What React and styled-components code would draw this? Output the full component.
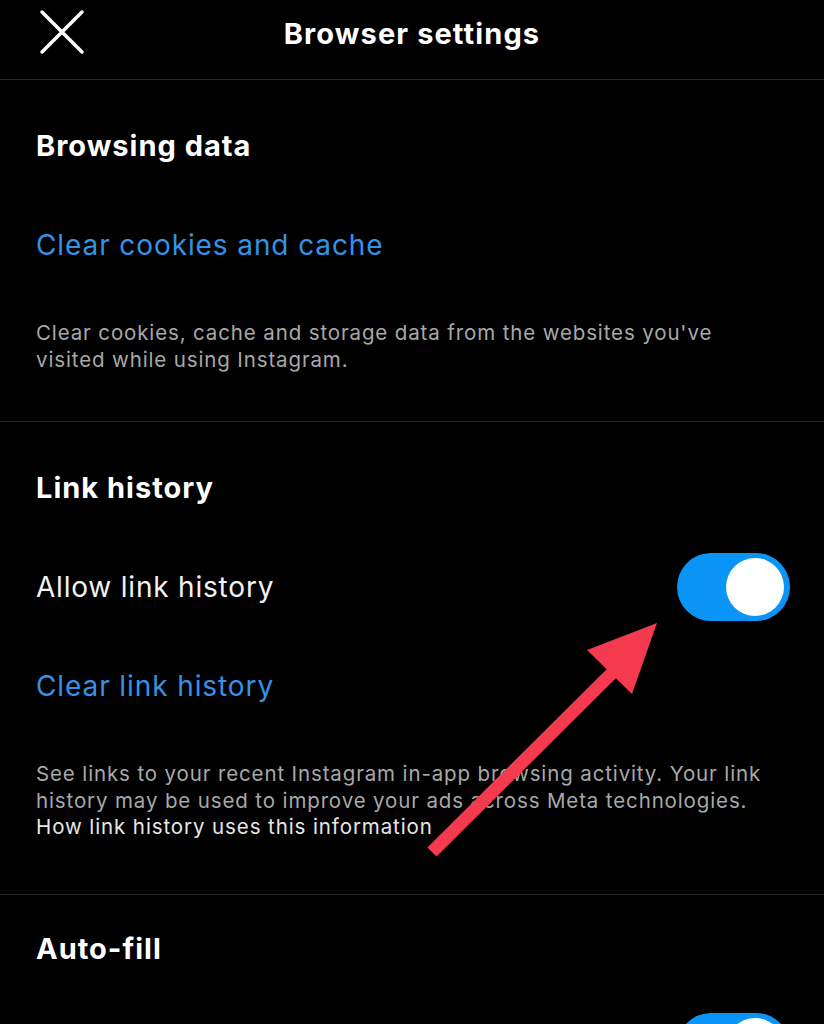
import React from 'react';
import styled, { createGlobalStyle } from 'styled-components';

const GlobalStyle = createGlobalStyle`
  html, body {
    margin: 0;
    padding: 0;
    background: #000;
  }
  body {
    font-family: Inter, Roboto, "Liberation Sans", sans-serif;
    -webkit-font-smoothing: antialiased;
  }
`;

const blue = '#3592e6';
const toggleBlue = '#0a95f6';
const grey = '#a8a8a8';
const divider = '#262626';

const Screen = styled.div`
  position: relative;
  width: 824px;
  height: 1024px;
  overflow: hidden;
  background: #000;
  color: #f5f5f5;
`;

const Header = styled.div`
  height: 79px;
  display: flex;
  align-items: center;
  justify-content: center;
  position: relative;
  border-bottom: 1px solid ${divider};
`;

const CloseButton = styled.button`
  position: absolute;
  left: 38px;
  top: 8px;
  width: 48px;
  height: 48px;
  padding: 0;
  border: none;
  background: none;
  display: flex;
  align-items: center;
  justify-content: center;
`;

const HeaderTitle = styled.h1`
  margin: 0 0 12px;
  font-size: 29px;
  font-weight: 700;
  letter-spacing: 1.1px;
  color: #fff;
`;

const Section = styled.section`
  padding: ${({ $top }) => $top}px 36px ${({ $bottom }) => $bottom}px;
  border-bottom: ${({ $last }) => ($last ? 'none' : `1px solid ${divider}`)};
  display: flex;
  flex-direction: column;
`;

const SectionTitle = styled.h2`
  margin: 0;
  font-size: 29px;
  line-height: 36px;
  font-weight: 700;
  letter-spacing: 1px;
  color: #fff;
`;

const LinkAction = styled.a`
  display: block;
  margin-top: ${({ $gap }) => $gap}px;
  font-size: 28px;
  line-height: 36px;
  color: ${blue};
  text-decoration: none;
  letter-spacing: 0.9px;
`;

const Description = styled.p`
  margin: ${({ $gap }) => $gap}px 0 0;
  font-size: 20.5px;
  line-height: 26.5px;
  color: ${grey};
  letter-spacing: 0.87px;
  white-space: nowrap;
`;

const InfoLink = styled.span`
  color: #e6e6e6;
  letter-spacing: 0.9px;
`;

const ToggleRow = styled.div`
  margin-top: ${({ $gap }) => $gap}px;
  height: 68px;
  display: flex;
  align-items: center;
  justify-content: space-between;
`;

const RowLabel = styled.span`
  font-size: 28px;
  color: #f2f2f2;
  letter-spacing: 0.8px;
`;

const Track = styled.div`
  width: 113px;
  height: 68px;
  margin-right: -2px;
  border-radius: 34px;
  background: ${toggleBlue};
  display: flex;
  align-items: center;
  justify-content: flex-end;
  padding: 0 6px;
  box-sizing: border-box;
  flex-shrink: 0;
`;

const Knob = styled.div`
  width: 58px;
  height: 58px;
  border-radius: 50%;
  background: #fff;
`;

const ArrowOverlay = styled.svg`
  position: absolute;
  left: 0;
  top: 0;
  pointer-events: none;
`;

function Toggle() {
  return (
    <Track>
      <Knob />
    </Track>
  );
}

export default function App() {
  return (
    <>
      <GlobalStyle />
      <Screen>
        <Header>
          <CloseButton aria-label="Close">
            <svg width="46" height="46" viewBox="0 0 46 46">
              <path d="M3 3 L43 43 M43 3 L3 43" stroke="#fff" strokeWidth="3.5" strokeLinecap="round" />
            </svg>
          </CloseButton>
          <HeaderTitle>Browser settings</HeaderTitle>
        </Header>

        <Section $top={48} $bottom={48}>
          <SectionTitle>Browsing data</SectionTitle>
          <LinkAction $gap={63}>Clear cookies and cache</LinkAction>
          <Description $gap={57}>
            Clear cookies, cache and storage data from the websites you've
            <br />
            visited while using Instagram.
          </Description>
        </Section>

        <Section $top={48} $bottom={53}>
          <SectionTitle>Link history</SectionTitle>
          <ToggleRow $gap={47}>
            <RowLabel>Allow link history</RowLabel>
            <Toggle />
          </ToggleRow>
          <LinkAction $gap={47}>Clear link history</LinkAction>
          <Description $gap={57}>
            See links to your recent Instagram in-app browsing activity. Your link
            <br />
            history may be used to improve your ads across Meta technologies.
            <br />
            <InfoLink>How link history uses this information</InfoLink>
          </Description>
        </Section>

        <Section $top={36} $bottom={0} $last>
          <SectionTitle>Auto-fill</SectionTitle>
          <ToggleRow $gap={46}>
            <RowLabel />
            <Toggle />
          </ToggleRow>
        </Section>

        <ArrowOverlay width="824" height="1024" viewBox="0 0 824 1024">
          <path d="M432 852 L618 667" stroke="#f33a4e" strokeWidth="13" />
          <polygon points="657,623 632,694 587,650" fill="#f33a4e" />
        </ArrowOverlay>
      </Screen>
    </>
  );
}
